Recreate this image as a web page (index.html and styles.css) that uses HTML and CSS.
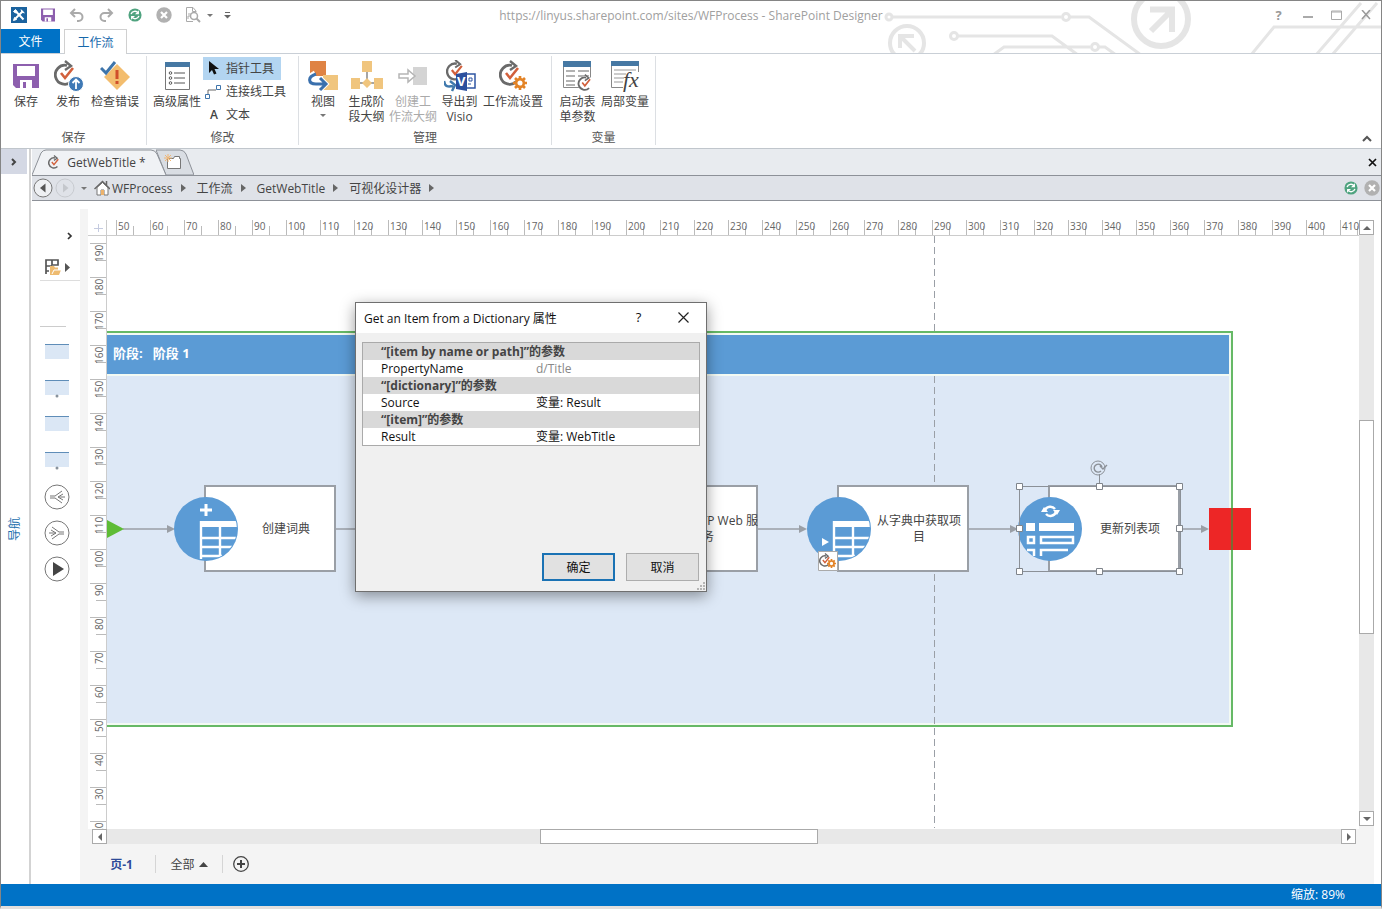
FILE: index.html
```html
<!DOCTYPE html>
<html lang="zh-CN">
<head>
    <meta charset="UTF-8">
    <title>SharePoint Designer</title>
    <link rel="stylesheet" href="styles.css">
</head>
<body>
    <!-- Shared icons -->
    <svg class="sprite" aria-hidden="true">
        <clipPath id="disc"><circle cx="32" cy="32" r="31"/></clipPath>
        <symbol id="i-flow" viewBox="0 0 24 26">
            <path d="M17.500 21.500A9.500 9.500 0 1 1 13 5.500" fill="none" stroke="#6a6a6a" stroke-width="2.800"/>
            <path d="M11 1l6 5-6 4" fill="none" stroke="#6a6a6a" stroke-width="2.400"/>
            <path d="M7 13l4 5 8-10" fill="none" stroke="#d2603c" stroke-width="2.600"/>
        </symbol>
        <symbol id="i-save" viewBox="0 0 26 26">
            <path d="M0 1h26v24H3l-3-3z" fill="#8d5fae"/>
            <path d="M4 3h18v10H4zM7 17h12v8H7z" fill="#fff"/>
            <path d="M10 19h3v6h-3z" fill="#8d5fae"/>
        </symbol>
        <symbol id="i-refresh" viewBox="0 0 16 16">
            <circle cx="8" cy="8" r="7.500" fill="#4fa37f"/>
            <path d="M3.500 7a4.600 4.600 0 0 1 8-1.500M12.500 9a4.600 4.600 0 0 1-8 1.500" fill="none" stroke="#fff" stroke-width="1.600"/>
            <path d="M12.500 2.500v4.500H8zM3.500 13.500V9H8z" fill="#fff"/>
        </symbol>
        <symbol id="i-stop" viewBox="0 0 16 16">
            <circle cx="8" cy="8" r="7.700" fill="#b1b1b1"/>
            <path d="M5 5l6 6M11 5l-6 6" stroke="#fff" stroke-width="2.200"/>
        </symbol>
        <symbol id="i-gear" viewBox="0 0 16 16">
            <path d="M8 0v16M0 8h16M2.300 2.300l11.400 11.400M13.700 2.300L2.300 13.700" stroke="#e38326" stroke-width="3"/>
            <circle cx="8" cy="8" r="4.400" fill="#fff" stroke="#e38326" stroke-width="3"/>
        </symbol>
        <symbol id="i-table" viewBox="0 0 64 64">
            <circle cx="32" cy="32" r="32" fill="#5b9bd5"/>
            <g clip-path="url(#disc)">
                <path d="M26 24h38v6H26z" fill="#fff"/>
                <path d="M27 24v38M46 30v30M27 41h35M27 50h31M27 59h21" fill="none" stroke="#fff" stroke-width="2.400"/>
            </g>
        </symbol>
        <symbol id="i-stage" viewBox="0 0 24 20">
            <path d="M0 1h24v15H0z" fill="#dbe7f5"/>
            <path d="M0 1.500h24" stroke="#5f8db8"/>
        </symbol>
    </svg>

    <div class="window">
        <svg class="header-art" viewBox="0 0 502 53" aria-hidden="true">
            <g fill="none" stroke="#e5e5e5" stroke-width="3">
                <circle cx="10" cy="16" r="3"/>
                <path d="M13 16h169M191 16h19l52 38"/>
                <circle cx="187" cy="16" r="3.500"/>
                <circle cx="75" cy="35" r="3.500"/>
                <path d="M79 35h94l26 19M114 54l11-8h86M220 46h6l11 8"/>
                <circle cx="216" cy="46" r="3.500"/>
                <path d="M372 54l23-28h107M437 54L482 2M453 54L498 2"/>
                <circle cx="28" cy="42" r="17" stroke-width="4"/>
                <circle cx="282" cy="18" r="27" stroke-width="6"/>
                <path d="M36 50L22 36M21 47V35h14" stroke-width="4"/>
                <path d="M272 30l19-19M271 8.500h22V31" stroke-width="6"/>
            </g>
        </svg>

        <header class="titlebar">
            <div class="quick-access">
                <button type="button" aria-label="SharePoint Designer">
                    <svg width="16" height="16" viewBox="0 0 16 16"><path d="M0 0h16v16H0z" fill="#1b639f"/><path d="M4 12l8-8M4.500 4l8 8.500" stroke="#fff" stroke-width="2"/><path d="M2.500 4.500l2-2 1.500 2-1.500 1.500zM10 2.500l1 2.500 2.500 1M2.500 13.500l1-3 2 2z" fill="#fff" stroke="#fff"/></svg>
                </button>
                <button type="button" aria-label="保存"><svg width="14" height="14"><use href="#i-save"/></svg></button>
                <button type="button" aria-label="撤消">
                    <svg width="16" height="14" viewBox="0 0 16 14"><path d="M2 5h7.500a4 4 0 0 1 0 8H8M6 1L2 5l4 4" fill="none" stroke="#aaa" stroke-width="2"/></svg>
                </button>
                <button type="button" aria-label="恢复">
                    <svg width="16" height="14" viewBox="0 0 16 14"><path d="M14 5H6.500a4 4 0 0 0 0 8H8M10 1l4 4-4 4" fill="none" stroke="#aaa" stroke-width="2"/></svg>
                </button>
                <button type="button" aria-label="刷新"><svg width="14" height="14"><use href="#i-refresh"/></svg></button>
                <button type="button" aria-label="停止"><svg width="16" height="16"><use href="#i-stop"/></svg></button>
                <button type="button" aria-label="预览">
                    <svg width="16" height="16" viewBox="0 0 16 16" fill="none" stroke="#aaa"><path d="M11 5V4L8 .5H1.500v14H8M7.500 1v3.500H11M3 12V9h2M3 7h3"/><circle cx="9" cy="9" r="3.500" stroke-width="1.500"/><path d="M11.500 11.500L15 15" stroke-width="2"/></svg>
                </button>
                <span class="caret"></span>
                <button type="button" class="customize" aria-label="自定义快速访问工具栏">
                    <svg width="7" height="8" viewBox="0 0 7 8"><path d="M1 1.500h5" stroke="#666"/><path d="M0 4h7L3.500 7.500z" fill="#666"/></svg>
                </button>
            </div>
            <div class="title">https://linyus.sharepoint.com/sites/WFProcess - SharePoint Designer</div>
            <div class="window-controls">
                <button type="button" class="help">?</button>
                <button type="button" aria-label="最小化"><svg width="10" height="10"><path d="M0 7h10" stroke="#aaa" stroke-width="2"/></svg></button>
                <button type="button" aria-label="最大化"><svg width="11" height="10" fill="none" stroke="#aaa"><path d="M.5 1h10v8.500H.5zM0 2h11"/></svg></button>
                <button type="button" aria-label="关闭"><svg width="10" height="10"><path d="M1 0l8 9M9 0L1 9" stroke="#999" stroke-width="1.500"/></svg></button>
            </div>
        </header>

        <nav class="ribbon-tabs">
            <button type="button" class="tab-file">文件</button>
            <button type="button" class="tab-active">工作流</button>
        </nav>

        <section class="ribbon">
            <div class="group">
                <div class="group-items group-save">
                    <button type="button" class="big"><svg width="26" height="26"><use href="#i-save"/></svg>保存</button>
                    <button type="button" class="big">
                        <svg width="32" height="32" viewBox="0 0 32 32"><use href="#i-flow" width="24" height="26" x="2"/><circle cx="24" cy="24" r="7.500" fill="#3f79b5" stroke="#fff"/><path d="M24 29v-9M20.500 23l3.500-3.500 3.500 3.500" fill="none" stroke="#fff" stroke-width="1.800"/></svg>发布
                    </button>
                    <button type="button" class="big">
                        <svg width="30" height="30" viewBox="0 0 30 30"><path d="M17 3l13 13-13 13L4 16z" fill="#f3bd6e"/><path d="M17 9v9M17 20v3" stroke="#cf4f2b" stroke-width="3"/><path d="M1 7l5 5 9-11" fill="none" stroke="#3e75ab" stroke-width="3"/></svg>检查错误
                    </button>
                </div>
                <div class="group-name">保存</div>
            </div>

            <div class="group">
                <div class="group-items group-modify">
                    <button type="button" class="big">
                        <svg width="25" height="28" viewBox="0 0 25 28"><path d="M.5.500h24v27H.5z" fill="#fff" stroke="#777"/><path d="M0 0h25v5H0z" fill="#4678a3"/><g stroke="#555"><path d="M9 11h11M9 16h11M9 21h11"/><g fill="none"><circle cx="5.500" cy="11" r="1.300"/><circle cx="5.500" cy="16" r="1.300"/><circle cx="5.500" cy="21" r="1.300"/></g></g></svg>高级属性
                    </button>
                    <div class="tools">
                        <button type="button" class="tool selected"><svg width="16" height="16" viewBox="0 0 16 16"><path d="M4 0v12l3-3 2 4.500 2.500-1-2-4.500H14z" fill="#111"/></svg>指针工具</button>
                        <button type="button" class="tool"><svg width="16" height="16" viewBox="0 0 16 16" fill="none" stroke="#3f75ab"><path d="M.5 10.500h4v4h-4zM11.500 1.500h4v4h-4z"/><path d="M3 10V6h8" stroke="#666"/></svg>连接线工具</button>
                        <button type="button" class="tool"><span class="letter">A</span>文本</button>
                    </div>
                </div>
                <div class="group-name">修改</div>
            </div>

            <div class="group">
                <div class="group-items group-manage">
                    <button type="button" class="big">
                        <svg width="30" height="30" viewBox="0 0 30 30"><path d="M2 0h16v15H2z" fill="#df8344"/><path d="M15 14h15v15H15z" fill="#f0c57e"/><path d="M7 12c-8 4-7 11 0 11h9M12 17l6 6-6 6" fill="none" stroke="#fff" stroke-width="5"/><path d="M8 13c-9 3-8 10 0 10h8M12 17l6 6-6 6" fill="none" stroke="#3a70ad" stroke-width="3"/></svg>视图<span class="caret"></span>
                    </button>
                    <button type="button" class="big">
                        <svg width="32" height="30" viewBox="0 0 32 30"><path d="M16 10v8M8 22h16" stroke="#888" stroke-width="1.500"/><path d="M11 0h10v11H11zM0 17h9v11H0zM23 17h9v11h-9zM16 17l5 5-5 5-5-5z" fill="#f0c57e"/></svg>生成阶<br>段大纲
                    </button>
                    <button type="button" class="big disabled" disabled>
                        <svg width="30" height="30" viewBox="0 0 30 30"><path d="M15 6h14v18H15z" fill="#d4d4d4"/><path d="M1 13h9V9l7 6-7 6v-4H1z" fill="#fff" stroke="#b5b5b5" stroke-width="1.500"/></svg>创建工<br>作流大纲
                    </button>
                    <button type="button" class="big">
                        <svg width="32" height="32" viewBox="0 0 32 32"><use href="#i-flow" width="20" height="22" x="2" y="-1"/><path d="M0 21c1 6 4 6 9 5M6 21l5 4-3 6" fill="none" stroke="#3f79ad" stroke-width="2.500"/><path d="M20 14h11v14H20z" fill="#fff" stroke="#2f55a3" stroke-width="1.500"/><path d="M25 18h3v3h-3zM24 24h3" fill="none" stroke="#2f55a3"/><path d="M12 14l11-2v19l-11-2z" fill="#2b4f9e"/><text x="13" y="26" class="visio">V</text></svg>导出到<br>Visio
                    </button>
                    <button type="button" class="big">
                        <svg width="30" height="32" viewBox="0 0 30 32"><use href="#i-flow" width="24" height="26" x="1"/><use href="#i-gear" width="14" height="14" x="15" y="16"/></svg>工作流设置
                    </button>
                </div>
                <div class="group-name">管理</div>
            </div>

            <div class="group">
                <div class="group-items group-vars">
                    <button type="button" class="big">
                        <svg width="32" height="32" viewBox="0 0 32 32"><path d="M1.500 1.500h27v26h-27z" fill="#fff" stroke="#888"/><path d="M1 1h28v6H1z" fill="#4678a3"/><path d="M4 11h9M16 11h11M4 16h9M16 16h11M4 21h9M4 25h9" stroke="#999" stroke-width="1.500"/><circle cx="24" cy="24" r="8" fill="#fff"/><use href="#i-flow" width="17" height="17" x="15" y="14"/></svg>启动表<br>单参数
                    </button>
                    <button type="button" class="big">
                        <svg width="32" height="32" viewBox="0 0 32 32"><path d="M2.500 27.500v-26h27V12M2.500 27.500H14" fill="none" stroke="#888"/><path d="M2 1h28v5H2z" fill="#4678a3"/><path d="M5 10h22M5 14h12M5 18h10M5 22h9" stroke="#999"/><text x="14" y="27" class="fx">fx</text></svg>局部变量
                    </button>
                </div>
                <div class="group-name">变量</div>
            </div>

            <button type="button" class="collapse" aria-label="折叠功能区"><svg width="10" height="8"><path d="M1 6l4-4 4 4" fill="none" stroke="#555" stroke-width="2"/></svg></button>
        </section>

        <main class="workarea">
            <aside class="nav-rail">
                <button type="button" class="expand" aria-label="展开导航"><svg width="6" height="8"><path d="M1 1l3 3-3 3" fill="none" stroke="#444" stroke-width="2"/></svg></button>
                <a href="#" class="nav-label">导航</a>
            </aside>

            <div class="document">
                <div class="doc-tabs">
                    <button type="button" class="doc-tab">
                        <svg class="shape" viewBox="0 0 134 26" preserveAspectRatio="none"><path d="M0 26L9 4q2-3 5-3h105q4 0 6 4l9 21" fill="#f0f2f5" stroke="#8d9198"/></svg>
                        <svg class="flow" width="13" height="14"><use href="#i-flow"/></svg>
                        <span>GetWebTitle *</span>
                    </button>
                    <button type="button" class="doc-tab new-tab" aria-label="新建选项卡">
                        <svg class="shape" viewBox="0 0 38 26" preserveAspectRatio="none"><path d="M0 1h24q4 0 6 4l8 21H10z" fill="#d9dde3" stroke="#8d9198"/></svg>
                        <svg class="flow" width="18" height="16" viewBox="0 0 18 16"><path d="M3.500 4.500h6l1-2h5v2h1v10h-13z" fill="#fff" stroke="#777"/><path d="M4 0v8M0 4h8M1 1l6 6M7 1L1 7" stroke="#efb676"/></svg>
                    </button>
                    <button type="button" class="doc-close" aria-label="关闭"><svg width="9" height="9"><path d="M1 1l7 7M8 1L1 8" stroke="#111" stroke-width="1.700"/></svg></button>
                </div>

                <nav class="breadcrumb">
                    <button type="button" aria-label="后退"><svg width="20" height="20" viewBox="0 0 20 20"><circle cx="10" cy="10" r="9" fill="#eef0f3" stroke="#777"/><path d="M12.500 5.500v9L7 10z" fill="#555"/></svg></button>
                    <button type="button" aria-label="前进"><svg width="20" height="20" viewBox="0 0 20 20"><circle cx="10" cy="10" r="9" fill="none" stroke="#c8cbd0"/><path d="M8 5.500v9l5.500-4.500z" fill="#c4c7cc"/></svg></button>
                    <span class="caret history"></span>
                    <svg width="16" height="16" viewBox="0 0 16 16"><path d="M3 7.500v7.500h4v-5h3v5h4V7.500l-5.500-5z" fill="#fff" stroke="#777"/><path d="M.5 9L8.500 1.500 16 9M12.500 5V1" fill="none" stroke="#666" stroke-width="1.500"/><path d="M7 10h3v5H7z" fill="#edb36c"/></svg>
                    <a href="#">WFProcess</a><i class="sep"></i>
                    <a href="#">工作流</a><i class="sep"></i>
                    <a href="#">GetWebTitle</a><i class="sep"></i>
                    <a href="#">可视化设计器</a><i class="sep"></i>
                    <span class="spacer"></span>
                    <button type="button" aria-label="刷新"><svg width="14" height="14"><use href="#i-refresh"/></svg></button>
                    <button type="button" class="crumb-stop" aria-label="停止"><svg width="16" height="16"><use href="#i-stop"/></svg></button>
                </nav>

                <div class="designer">
                    <div class="stencil">
                        <button type="button" class="stencil-open" aria-label="展开形状"><svg width="6" height="8"><path d="M1 1l3 3-3 3" fill="none" stroke="#333" stroke-width="1.700"/></svg></button>
                        <button type="button" class="stencil-pick" aria-label="更多形状">
                            <svg width="26" height="18" viewBox="0 0 26 18"><path d="M2 16V2h12v5H8V2M2 8h6M5 13H2" fill="none" stroke="#555" stroke-width="1.700"/><path d="M6 8h4l1 1.500h3V12h3l-2 5H6z" fill="#eebb70"/><path d="M8 16l2-4h7" fill="none" stroke="#fff"/><path d="M21 5v9l5-4.500z" fill="#555"/></svg>
                        </button>
                        <div class="stencil-line"></div>
                        <div class="shapes">
                            <svg width="24" height="20"><use href="#i-stage"/></svg>
                            <svg width="24" height="20"><use href="#i-stage"/><circle cx="12" cy="17" r="1.500" fill="#88929c"/></svg>
                            <svg width="24" height="20"><use href="#i-stage"/></svg>
                            <svg width="24" height="20"><use href="#i-stage"/><circle cx="12" cy="17" r="1.500" fill="#88929c"/></svg>
                            <svg width="26" height="26" viewBox="0 0 26 26" fill="none" stroke="#777"><circle cx="13" cy="13" r="12"/><path d="M6 12h5l7-5M6 14h5l7 5M19 10l-5 3 5 3M14 13h7"/></svg>
                            <svg width="26" height="26" viewBox="0 0 26 26" fill="none" stroke="#777"><circle cx="13" cy="13" r="12"/><path d="M20 12h-5L8 7M20 14h-5l-7 5M7 10l5 3-5 3M12 13H5"/></svg>
                            <svg width="26" height="26" viewBox="0 0 26 26"><circle cx="13" cy="13" r="12" fill="none" stroke="#777"/><path d="M9 6v14l11-7z" fill="#444"/></svg>
                        </div>
                    </div>

                    <div class="page">
                        <div class="corner"></div>
                        <div class="ruler-x">
                            <span>50</span><span>60</span><span>70</span><span>80</span><span>90</span><span>100</span><span>110</span><span>120</span><span>130</span><span>140</span><span>150</span><span>160</span><span>170</span><span>180</span><span>190</span><span>200</span><span>210</span><span>220</span><span>230</span><span>240</span><span>250</span><span>260</span><span>270</span><span>280</span><span>290</span><span>300</span><span>310</span><span>320</span><span>330</span><span>340</span><span>350</span><span>360</span><span>370</span><span>380</span><span>390</span><span>400</span><span>410</span>
                        </div>
                        <div class="ruler-y">
                            <span>190</span><span>180</span><span>170</span><span>160</span><span>150</span><span>140</span><span>130</span><span>120</span><span>110</span><span>100</span><span>90</span><span>80</span><span>70</span><span>60</span><span>50</span><span>40</span><span>30</span><span>20</span>
                        </div>

                        <div class="canvas">
                            <div class="stage">
                                <div class="stage-head">阶段:&nbsp;&nbsp; 阶段 1</div>
                                <div class="stage-body"></div>
                            </div>
                            <svg class="links" width="1160" height="592">
                                <path d="M827.500 0v98M827.500 140v452" stroke="#9a9fa6" stroke-dasharray="7 4"/>
                                <g stroke="#9a9fa6" stroke-width="1.500">
                                    <path d="M16 293h47M229 293h254M651 293h45M861 293h48M1073 293h26"/>
                                </g>
                                <path d="M60 289l8 4-8 4zM692 289l8 4-8 4zM903 289l8 4-8 4zM1094 289l8 4-8 4z" fill="#9a9fa6"/>
                                <path d="M0 284l17 9-17 9z" fill="#5ebc36"/>
                                <path d="M1102 272h42v42h-42z" fill="#ed2626"/>
                                <path d="M1125 272v42" stroke="#7c6a32" stroke-width="2"/>
                            </svg>

                            <div class="node node-create">
                                <svg class="badge" width="64" height="64"><use href="#i-table"/><path d="M32 7v12M26 13h12" stroke="#fff" stroke-width="3"/></svg>
                                <div class="box">创建词典</div>
                            </div>
                            <div class="node node-http">
                                <div class="box">调用 HTTP Web 服<br>务</div>
                            </div>
                            <div class="node node-get">
                                <svg class="badge" width="64" height="64"><use href="#i-table"/><path d="M15 41v8l7-4z" fill="#fff"/></svg>
                                <div class="box">从字典中获取项<br>目</div>
                                <svg class="mini" width="20" height="20" viewBox="0 0 20 20"><path d="M.5.500h19v19H.5z" fill="#fff" stroke="#aaa"/><use href="#i-flow" width="13" height="14" x="1" y="2"/><use href="#i-gear" width="9" height="9" x="9" y="8"/></svg>
                            </div>
                            <div class="node node-update">
                                <svg class="badge" width="64" height="64" viewBox="0 0 64 64"><circle cx="32" cy="32" r="32" fill="#5b9bd5"/><g fill="none" stroke="#fff" stroke-width="2.500"><path d="M27 13a6 6 0 0 1 10-1M38 15a6 6 0 0 1-10 2"/><path d="M10 40h6v6h-6zM23 40h32v6H23zM9 53h7v6M23 59v-6h27"/></g><path d="M8 26h9v8H8zM21 26h35v8H21zM35 13h7l-3 5zM30 15h-7l3-5z" fill="#fff"/></svg>
                                <div class="box">更新列表项</div>
                                <svg class="handles" width="170" height="112" viewBox="0 0 170 112">
                                    <path d="M4.500 22.500h161v85h-161zM84.500 22v-12" fill="none" stroke="#8b9097"/>
                                    <path d="M1.500 19.500h6v6h-6zM81.500 19.500h6v6h-6zM161.500 19.500h6v6h-6zM1.500 61.500h6v6h-6zM161.500 61.500h6v6h-6zM1.500 104.500h6v6h-6zM81.500 104.500h6v6h-6zM161.500 104.500h6v6h-6z" fill="#fff" stroke="#7f848b"/>
                                </svg>
                                <svg class="rotate" width="18" height="16" viewBox="0 0 18 16" fill="none" stroke="#8b9097"><circle cx="8" cy="8" r="7"/><path d="M11 11a4 4 0 1 1 1-4M10 6l3 3 4-4" stroke-width="1.400"/></svg>
                            </div>
                        </div>

                        <div class="scroll-y">
                            <button type="button" aria-label="向上滚动"><svg width="8" height="4"><path d="M0 4h8L4 0z" fill="#666"/></svg></button>
                            <div class="track"><div class="thumb"></div></div>
                            <button type="button" aria-label="向下滚动"><svg width="8" height="4"><path d="M0 0h8L4 4z" fill="#666"/></svg></button>
                        </div>
                        <div class="scroll-x">
                            <button type="button" aria-label="向左滚动"><svg width="4" height="8"><path d="M4 0v8L0 4z" fill="#666"/></svg></button>
                            <div class="track"><div class="thumb"></div></div>
                            <button type="button" aria-label="向右滚动"><svg width="4" height="8"><path d="M0 0v8l4-4z" fill="#666"/></svg></button>
                        </div>

                        <div class="page-tabs">
                            <button type="button" class="current">页-1</button>
                            <button type="button" class="all">全部 <svg width="9" height="5"><path d="M0 5h9L4.500 0z" fill="#444"/></svg></button>
                            <button type="button" class="add" aria-label="插入页"><svg width="16" height="16" viewBox="0 0 16 16" fill="none" stroke="#444"><circle cx="8" cy="8" r="7.300" stroke-width="1.300"/><path d="M8 4v8M4 8h8" stroke-width="2"/></svg></button>
                        </div>
                    </div>
                </div>
            </div>
        </main>

        <footer class="statusbar">缩放: 89%</footer>

        <!-- Action properties dialog -->
        <div class="dialog" role="dialog" aria-labelledby="dialogTitle">
            <div class="dialog-title">
                <span id="dialogTitle">Get an Item from a Dictionary 属性</span>
                <button type="button" class="dialog-help">?</button>
                <button type="button" aria-label="关闭"><svg width="11" height="11"><path d="M.5.500l10 10M10.500.500l-10 10" stroke="#222" stroke-width="1.200"/></svg></button>
            </div>
            <table class="params">
                <colgroup><col class="name-col"><col></colgroup>
                <tbody>
                    <tr><th colspan="2">“[item by name or path]”的参数</th></tr>
                    <tr><td>PropertyName</td><td class="muted">d/Title</td></tr>
                    <tr><th colspan="2">“[dictionary]”的参数</th></tr>
                    <tr><td>Source</td><td>变量: Result</td></tr>
                    <tr><th colspan="2">“[item]”的参数</th></tr>
                    <tr><td>Result</td><td>变量: WebTitle</td></tr>
                </tbody>
            </table>
            <div class="dialog-actions">
                <button type="button" class="primary">确定</button>
                <button type="button">取消</button>
            </div>
            <svg class="grip" width="9" height="9" fill="#b5b5b5"><path d="M6 0h2v2H6zM3 3h2v2H3zM6 3h2v2H6zM0 6h2v2H0zM3 6h2v2H3zM6 6h2v2H6z"/></svg>
        </div>
    </div>
</body>
</html>
```
FILE: styles.css
```css
* {
    box-sizing: border-box;
}
body {
    margin: 0;
    font-family: "Open Sans", "Noto Sans CJK SC", sans-serif;
    font-size: 12px;
    line-height: 15px;
    color: #444;
    background-color: #fff;
}
button {
    display: flex;
    align-items: center;
    justify-content: center;
    padding: 0;
    border: 0;
    background: none;
    color: inherit;
    font: inherit;
    white-space: nowrap;
}
a {
    color: inherit;
    text-decoration: none;
}
svg {
    flex: none;
}
.sprite {
    position: absolute;
    width: 0;
    height: 0;
}
.window {
    position: relative;
    display: flex;
    flex-direction: column;
    height: 100vh;
    min-height: 700px;
    border: 1px solid #858585;
    border-bottom: 3px solid #e3dfdd;
    overflow: hidden;
}
.caret {
    border: 3px solid transparent;
    border-top-color: #777;
    border-bottom: 0;
}

/* Title bar */
.header-art {
    position: absolute;
    top: 0;
    right: 0;
    width: 502px;
    height: 53px;
}
.titlebar {
    position: relative;
    display: grid;
    grid-template-columns: 1fr auto 1fr;
    align-items: center;
    height: 28px;
}
.quick-access {
    display: flex;
    align-items: center;
    padding-left: 3px;
}
.quick-access button,
.window-controls button {
    width: 29px;
    height: 28px;
}
.title {
    color: #a0a0a0;
}
.window-controls {
    display: flex;
    justify-content: flex-end;
    padding-right: 1px;
}
.help {
    color: #999;
    font-size: 13px;
    font-weight: bold;
}

/* Ribbon */
.ribbon-tabs {
    position: relative;
    display: flex;
    gap: 4px;
    height: 25px;
    border-bottom: 1px solid #c9cfd6;
}
.tab-file {
    width: 59px;
    background-color: #0072c6;
    color: #fff;
}
.tab-active {
    width: 63px;
    height: 25px;
    border: 1px solid #d0d0d0;
    border-bottom: 0;
    background-color: #fff;
    color: #1668ab;
}
.ribbon {
    position: relative;
    display: flex;
    height: 95px;
    padding: 2px 0 3px;
    border-bottom: 1px solid #c0c6cc;
}
.group {
    display: flex;
    flex-direction: column;
    border-right: 1px solid #dcdfe3;
}
.group-items {
    display: flex;
    flex: 1;
}
.group-save {
    padding: 0 5px 0 4px;
}
.group-modify {
    padding: 0 5px 0 4px;
}
.group-manage {
    padding: 0 7px 0 3px;
}
.group-vars {
    padding: 0 6px 0 2px;
}
.group-name {
    height: 15px;
    text-align: center;
    color: #555;
}
.big {
    display: block;
    min-width: 42px;
    text-align: center;
    line-height: 15px;
}
.big svg {
    display: block;
    height: 32px;
    margin: 4px auto 2px;
}
.group-items .big {
    align-self: flex-start;
}
.big .caret {
    display: block;
    width: 0;
    margin: 5px auto 0;
}
.group-save .big:last-child {
    min-width: 52px;
}
.group-modify .big {
    min-width: 52px;
}
.group-manage .big {
    min-width: 45px;
}
.group-manage .big:first-child {
    min-width: 42px;
}
.group-manage .big:last-child {
    min-width: 62px;
}
.group-vars .big {
    min-width: 47px;
}
.disabled {
    color: #aaa;
}
.visio {
    font: bold 13px "Open Sans", sans-serif;
    fill: #fff;
}
.fx {
    font: italic 22px "Liberation Serif", serif;
    fill: #444;
}
.tools {
    display: flex;
    flex-direction: column;
    align-items: flex-start;
    padding-top: 1px;
}
.tool {
    gap: 5px;
    height: 23px;
    padding: 0 7px 0 1px;
}
.tool svg,
.letter {
    width: 16px;
    margin-left: 1px;
}
.letter {
    padding-left: 2px;
    font-weight: 600;
}
.selected {
    background-color: #b3d5f1;
}
.collapse {
    align-self: flex-end;
    width: 29px;
    height: 12px;
    margin-left: auto;
}

/* Work area */
.workarea {
    display: flex;
    flex: 1;
    min-height: 0;
}
.nav-rail {
    display: flex;
    flex-direction: column;
    width: 30px;
    border-right: 2px solid #d3d3d3;
}
.expand {
    width: 26px;
    height: 25px;
    background-color: #d4d8e4;
}
.nav-label {
    display: flex;
    flex: 1;
    align-items: center;
    justify-content: center;
    width: 26px;
    writing-mode: vertical-rl;
    text-orientation: sideways;
    transform: rotate(180deg);
    color: #1d6fae;
}
.document {
    display: flex;
    flex: 1;
    flex-direction: column;
    min-width: 0;
    padding-left: 1px;
}
.doc-tabs {
    display: flex;
    height: 26px;
    background-color: #e8ebef;
}
.doc-tab {
    position: relative;
    z-index: 1;
    gap: 6px;
    width: 134px;
    padding-right: 4px;
}
.doc-tab .shape {
    position: absolute;
    top: 0;
    left: 0;
    width: 100%;
    height: 100%;
}
.doc-tab .flow,
.doc-tab span {
    position: relative;
}
.new-tab {
    z-index: 0;
    width: 38px;
    margin-left: -10px;
}
.doc-close {
    width: 17px;
    margin-left: auto;
}
.breadcrumb {
    display: flex;
    align-items: center;
    height: 26px;
    border-top: 1px solid #8d9198;
    border-bottom: 1px solid #8d9198;
    background-color: #dfe2e8;
}
.breadcrumb button {
    width: 22px;
    height: 24px;
}
.history {
    margin: 0 7px 0 5px;
}
.breadcrumb a {
    margin-left: 2px;
}
.sep {
    margin: 0 9px 0 8px;
    border: 4px solid transparent;
    border-left: 5px solid #666;
    border-right: 0;
}
.spacer {
    flex: 1;
}
.breadcrumb .crumb-stop {
    width: 19px;
}

/* Shape stencil */
.designer {
    display: flex;
    flex: 1;
    min-height: 0;
    padding: 8px 7px 0 0;
}
.stencil {
    display: flex;
    flex-direction: column;
    width: 48px;
    padding: 18px 0 0 8px;
}
.stencil-open {
    align-self: flex-end;
    width: 20px;
    height: 17px;
}
.stencil-pick {
    justify-content: flex-start;
    height: 28px;
    margin-top: 9px;
    padding-left: 4px;
    border-bottom: 1px solid #ddd;
}
.stencil-line {
    width: 26px;
    margin-top: 45px;
    border-bottom: 1px solid #ccc;
}
.shapes {
    display: grid;
    grid-auto-rows: 36px;
    place-items: center;
    width: 33px;
    margin-top: 8px;
}

/* Drawing page */
.page {
    display: grid;
    grid-template-columns: 19px 1fr 15px;
    grid-template-rows: 16px 1fr 15px 40px;
    flex: 1;
    min-width: 0;
    padding-top: 11px;
    border-left: 8px solid #f4f4f4;
}
.corner {
    border-right: 1px solid #ccc;
    border-bottom: 1px solid #ccc;
    background: linear-gradient(#c5cbe0, #c5cbe0) 10px 4px / 1px 8px no-repeat, linear-gradient(#c5cbe0, #c5cbe0) 6px 8px / 9px 1px no-repeat;
}
.ruler-x,
.ruler-y {
    display: flex;
    min-width: 0;
    min-height: 0;
    overflow: hidden;
    font-size: 10px;
    line-height: 12px;
    color: #666;
}
.ruler-x {
    padding-left: 9px;
    border-bottom: 1px solid #ccc;
}
.ruler-x span {
    flex: 0 0 34px;
    padding-left: 1px;
    border-left: 1px solid #bbb;
    background: linear-gradient(#bbb, #bbb) 16px 6px / 1px 10px no-repeat;
}
.ruler-y {
    flex-direction: column;
    padding-top: 7px;
    border-right: 1px solid #ccc;
}
/* Labels read bottom to top, so each mark is turned round */
.ruler-y span {
    display: flex;
    flex: 0 0 34px;
    flex-direction: column;
    align-items: flex-end;
    justify-content: center;
    width: 16px;
    margin-left: 2px;
    padding: 0 2px 1px 0;
    border-bottom: 1px solid #bbb;
    background: linear-gradient(#bbb, #bbb) 0 16px / 10px 1px no-repeat;
    writing-mode: vertical-rl;
    transform: rotate(180deg);
}
.canvas {
    position: relative;
    min-width: 0;
    overflow: hidden;
}
.stage {
    position: absolute;
    top: 95px;
    left: -4px;
    display: flex;
    flex-direction: column;
    gap: 2px;
    width: 1130px;
    height: 396px;
    padding: 2px;
    border: 2px solid #66b966;
    background-color: #f3faf3;
}
.stage-head {
    padding: 11px 6px 13px;
    background-color: #5b9bd5;
    color: #fff;
    font-size: 13px;
    font-weight: bold;
}
.stage-body {
    flex: 1;
    background-color: #dde8f6;
}
.links {
    position: absolute;
    top: 0;
    left: 0;
}
.node {
    position: absolute;
    top: 249px;
    width: 162px;
    padding-left: 30px;
}
.node-create {
    left: 67px;
}
.node-http {
    left: 489px;
}
.node-get {
    left: 700px;
}
.node-update {
    left: 911px;
}
.box {
    display: flex;
    align-items: center;
    justify-content: center;
    height: 87px;
    padding-left: 32px;
    border: 2px solid #9a9fa6;
    background-color: #fff;
    line-height: 16px;
    text-align: center;
    white-space: nowrap;
}
.badge {
    position: absolute;
    top: 12px;
    left: 0;
}
.mini {
    position: absolute;
    top: 66px;
    left: 11px;
}
.handles {
    position: absolute;
    top: -21px;
    left: -3px;
}
.rotate {
    position: absolute;
    top: -25px;
    left: 72px;
}

/* Scrollbars */
.scroll-y,
.scroll-x,
.track {
    display: flex;
}
.scroll-y {
    grid-area: 1 / 3 / 4 / 4;
    flex-direction: column;
    padding-bottom: 18px;
    background-color: #f4f4f4;
}
.scroll-x {
    grid-area: 3 / 1 / 4 / 3;
    padding: 0 3px 0 4px;
    background-color: #f4f4f4;
}
.scroll-y button,
.scroll-x button {
    flex: none;
    width: 15px;
    height: 15px;
    border: 1px solid #aaa;
    background-color: #fff;
}
.track {
    flex: 1;
    background-color: #e8e8e8;
}
.scroll-y .track {
    flex-direction: column;
}
.thumb {
    flex: 212;
    border: 1px solid #aaa;
    background-color: #fff;
}
.scroll-y .track::before {
    content: "";
    flex: 185;
}
.scroll-y .track::after {
    content: "";
    flex: 177;
}
.scroll-x .thumb {
    flex: 276;
}
.scroll-x .track::before {
    content: "";
    flex: 434;
}
.scroll-x .track::after {
    content: "";
    flex: 524;
}

/* Page tabs */
.page-tabs {
    display: flex;
    grid-column: 1 / 4;
    align-items: center;
    background-color: #f4f4f4;
}
.page-tabs button {
    height: 18px;
}
.page-tabs .current {
    width: 68px;
    border-right: 1px solid #d5d5d5;
    color: #2d4a98;
    font-weight: bold;
}
.page-tabs .all {
    gap: 4px;
    width: 67px;
    border-right: 1px solid #d5d5d5;
}
.page-tabs .add {
    width: 36px;
}
.statusbar {
    height: 22px;
    padding: 3px 36px 0 0;
    background-color: #0072c6;
    color: #fff;
    text-align: right;
}

/* Properties dialog */
.dialog {
    position: absolute;
    top: 301px;
    left: 354px;
    display: flex;
    flex-direction: column;
    width: 352px;
    height: 290px;
    border: 1px solid #6f6f6f;
    background-color: #f0f0f0;
    color: #111;
    box-shadow: 0 4px 14px rgba(0, 0, 0, 0.4);
    z-index: 2;
}
.dialog-title {
    display: flex;
    align-items: center;
    height: 30px;
    padding-left: 8px;
    background-color: #fff;
}
.dialog-title button {
    width: 45px;
    height: 28px;
    align-self: flex-start;
}
.dialog-title .dialog-help {
    margin-left: auto;
    font-size: 13px;
}
.params {
    margin: 9px 6px 0;
    border: 1px solid #aaa;
    border-spacing: 0;
    background-color: #fff;
    table-layout: fixed;
}
.name-col {
    width: 168px;
}
.params th,
.params td {
    height: 17px;
    padding: 0 0 0 18px;
    text-align: left;
}
.params th {
    background-color: #d9d9d9;
    color: #444;
}
.params td + td {
    padding-left: 5px;
}
.params .muted {
    color: #888;
}
.dialog-actions {
    display: flex;
    gap: 11px;
    justify-content: flex-end;
    margin-top: auto;
    padding: 0 7px 10px;
}
.dialog-actions button {
    width: 73px;
    height: 28px;
    border: 1px solid #adadad;
    background-color: #e1e1e1;
}
.dialog-actions .primary {
    border: 2px solid #1a72b4;
}
.grip {
    position: absolute;
    right: 0;
    bottom: 0;
}
```
